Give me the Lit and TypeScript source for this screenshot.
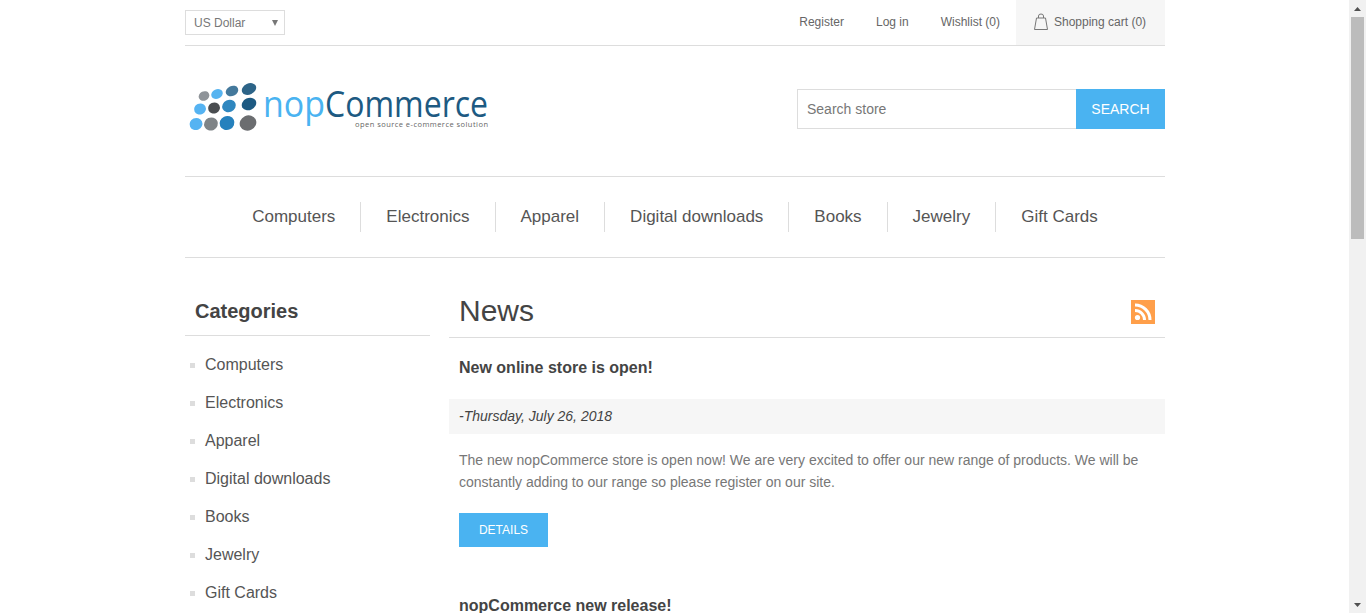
import { LitElement, css, html, svg } from "lit";
import { customElement } from "lit/decorators.js";

const MENU = ["Computers", "Electronics", "Apparel", "Digital downloads", "Books", "Jewelry", "Gift Cards"];

// dots of the logo: cx, cy, rx, ry, fill
const DOTS: [number, number, number, number, string][] = [
  [204, 96, 5.5, 4.7, "#8f9499"], [217, 94, 6, 4.7, "#57b4f0"], [232, 91, 6.5, 5, "#44799c"], [249, 89, 7.5, 5.5, "#2d6488"],
  [200, 109, 6, 5.5, "#55b3f2"], [214, 108, 6, 5.5, "#4a4d50"], [229, 106, 7, 6, "#2f87bf"], [249, 104, 7.5, 6, "#1d5a82"],
  [196, 124, 6.5, 6, "#55b3f2"], [211, 124, 7, 6.5, "#7f8487"], [227, 123, 7.5, 7, "#2581bd"], [248, 123, 8.5, 7.5, "#6b6d70"],
];

@customElement("app-root")
export class AppRoot extends LitElement {
  static styles = css`
    :host {
      display: flex;
      height: 613px;
      overflow: hidden;
      background: #fff;
      font-family: "Liberation Sans", Arial, sans-serif;
      color: #444;
    }
    a { color: inherit; text-decoration: none; }

    .page { flex: 1; min-width: 0; }
    .wrap { width: 980px; margin-left: 185px; }

    .scrollbar {
      width: 17px;
      flex: none;
      background: #f1f1f1;
      display: flex;
      flex-direction: column;
      align-items: center;
      justify-content: space-between;
      position: relative;
    }
    .arrow { height: 17px; display: flex; align-items: center; justify-content: center; }
    .thumb {
      position: absolute;
      top: 17px;
      left: 2px;
      width: 13px;
      height: 222px;
      background: #bcbcbc;
    }

    .top {
      height: 45px;
      border-bottom: 1px solid #ddd;
      display: flex;
      justify-content: space-between;
      font-size: 12px;
      color: #666;
    }
    .select {
      margin-top: 10px;
      width: 100px;
      height: 25px;
      box-sizing: border-box;
      border: 1px solid #ddd;
      padding: 0 8px;
      display: flex;
      align-items: center;
      justify-content: space-between;
      color: #777;
    }
    .caret {
      width: 0;
      height: 0;
      border-left: 3px solid transparent;
      border-right: 3px solid transparent;
      border-top: 6px solid #777;
      margin-right: -2px;
    }
    .links { display: flex; align-items: flex-start; }
    .links a { padding: 0 16px; line-height: 44px; white-space: nowrap; }
    .links a.cart {
      box-sizing: border-box;
      width: 149px;
      padding: 0 0 1px 17px;
      height: 45px;
      background: #f6f6f6;
      display: flex;
      align-items: center;
      gap: 5px;
    }

    .head {
      height: 130px;
      display: flex;
      align-items: center;
      justify-content: space-between;
    }
    .logo { align-self: flex-start; margin-top: 29px; width: 310px; height: 60px; }
    .logo svg { display: block; }
    .logo text { font-family: "Open Sans", sans-serif; }
    .search { display: flex; height: 40px; margin-top: -4px; }
    .search .field {
      width: 279px;
      box-sizing: border-box;
      border: 1px solid #ddd;
      border-right: none;
      padding: 0 9px;
      font-size: 14px;
      line-height: 38px;
      color: #777;
    }
    .search .go {
      width: 89px;
      background: #4ab3f1;
      color: #fff;
      font-size: 14px;
      line-height: 40px;
      text-align: center;
    }

    .menu {
      height: 80px;
      border-top: 1px solid #ddd;
      border-bottom: 1px solid #ddd;
      display: flex;
      align-items: center;
      justify-content: center;
      font-size: 17px;
      color: #555;
    }
    .menu a {
      padding: 0 25px;
      line-height: 30px;
      border-left: 1px solid #ddd;
      white-space: nowrap;
    }
    .menu a:first-child { border-left: none; }

    .columns { display: flex; justify-content: space-between; padding-top: 33px; }
    .side { width: 245px; }
    .side h3 {
      margin: 0;
      height: 44px;
      padding-left: 10px;
      font-size: 20px;
      line-height: 40px;
      color: #444;
      border-bottom: 1px solid #ddd;
    }
    .side ul { list-style: none; margin: 10px 0 0; padding: 0; }
    .side li {
      display: flex;
      align-items: center;
      height: 38px;
      font-size: 16px;
      color: #555;
    }
    .side li::before {
      content: "";
      width: 5px;
      height: 5px;
      margin: 1px 10px 0 5px;
      background: #ddd;
    }

    .main { width: 716px; }
    .title {
      box-sizing: border-box;
      height: 47px;
      border-bottom: 1px solid #ddd;
      display: flex;
      justify-content: space-between;
      align-items: center;
      padding: 0 10px 6px;
    }
    .title h1 { margin: 0; font-size: 30px; font-weight: 400; color: #444; line-height: 40px; }
    .title svg { display: block; margin-top: 2px; }
    .post-title {
      margin: 0;
      padding: 20px 10px 0;
      font-size: 16px;
      line-height: 20px;
      font-weight: 700;
      color: #444;
    }
    .date {
      margin-top: 21px;
      height: 35px;
      padding: 0 10px;
      background: #f6f6f6;
      font-size: 14px;
      font-style: italic;
      line-height: 35px;
      color: #444;
    }
    .body {
      margin: 15px 0 0;
      padding: 0 10px;
      font-size: 14px;
      line-height: 22px;
      color: #777;
    }
    .details {
      display: block;
      width: 89px;
      height: 34px;
      margin: 20px 0 0 10px;
      background: #4ab3f1;
      color: #fff;
      font-size: 12px;
      line-height: 34px;
      text-align: center;
    }
    .next { padding-top: 49px; }
    .next .post-title { padding-top: 0; }
  `;

  logo() {
    return svg`<svg width="310" height="60" viewBox="185 75 310 60">
      ${DOTS.map(([cx, cy, rx, ry, fill]) => svg`<ellipse cx=${cx} cy=${cy} rx=${rx} ry=${ry} fill=${fill} transform="rotate(-25 ${cx} ${cy})"></ellipse>`)}
      <text x="263" y="117" font-size="37" fill="#4ab3f1" textLength="62" lengthAdjust="spacingAndGlyphs">nop</text>
      <text x="325" y="117" font-size="37" fill="#1d5a82" textLength="163" lengthAdjust="spacingAndGlyphs">Commerce</text>
      <text x="355" y="126.5" font-size="7.5" fill="#666" textLength="133" lengthAdjust="spacing">open source e-commerce solution</text>
    </svg>`;
  }

  render() {
    return html`
      <div class="page">
        <div class="wrap">
          <div class="top">
            <div class="select"><span>US Dollar</span><span class="caret"></span></div>
            <div class="links">
              <a>Register</a>
              <a>Log in</a>
              <a>Wishlist (0)</a>
              <a class="cart">
                <svg width="16" height="18" viewBox="0 0 16 18" fill="none" stroke="#777" stroke-width="1">
                  <path d="M3.5 5h9l2 11.5h-13z" stroke-linejoin="round"></path>
                  <path d="M5.5 5V3a2.5 2 0 0 1 5 0v2"></path>
                </svg>
                Shopping cart (0)
              </a>
            </div>
          </div>

          <div class="head">
            <div class="logo">${this.logo()}</div>
            <div class="search">
              <div class="field">Search store</div>
              <div class="go">SEARCH</div>
            </div>
          </div>

          <nav class="menu">${MENU.map((m) => html`<a>${m}</a>`)}</nav>

          <div class="columns">
            <aside class="side">
              <h3>Categories</h3>
              <ul>${MENU.map((m) => html`<li>${m}</li>`)}</ul>
            </aside>
            <section class="main">
              <div class="title">
                <h1>News</h1>
                <svg width="24" height="24" viewBox="0 0 24 24">
                  <rect width="24" height="24" fill="#ff9f4a"></rect>
                  <circle cx="6.5" cy="17.5" r="2.6" fill="#fff"></circle>
                  <path d="M4 10.5a9.5 9.5 0 0 1 9.5 9.5M4 5a15 15 0 0 1 15 15" fill="none" stroke="#fff" stroke-width="3"></path>
                </svg>
              </div>
              <h2 class="post-title">New online store is open!</h2>
              <div class="date">-Thursday, July 26, 2018</div>
              <p class="body">The new nopCommerce store is open now! We are very excited to offer our new range of products. We will be constantly adding to our range so please register on our site.</p>
              <a class="details">DETAILS</a>
              <div class="next">
                <h2 class="post-title">nopCommerce new release!</h2>
              </div>
            </section>
          </div>
        </div>
      </div>
      <div class="scrollbar">
        <div class="arrow"><svg width="7" height="4" viewBox="0 0 7 4"><path d="M3.5 0L7 4H0z" fill="#505050"></path></svg></div>
        <div class="thumb"></div>
        <div class="arrow"><svg width="7" height="4" viewBox="0 0 7 4"><path d="M0 0h7L3.5 4z" fill="#505050"></path></svg></div>
      </div>
    `;
  }
}
